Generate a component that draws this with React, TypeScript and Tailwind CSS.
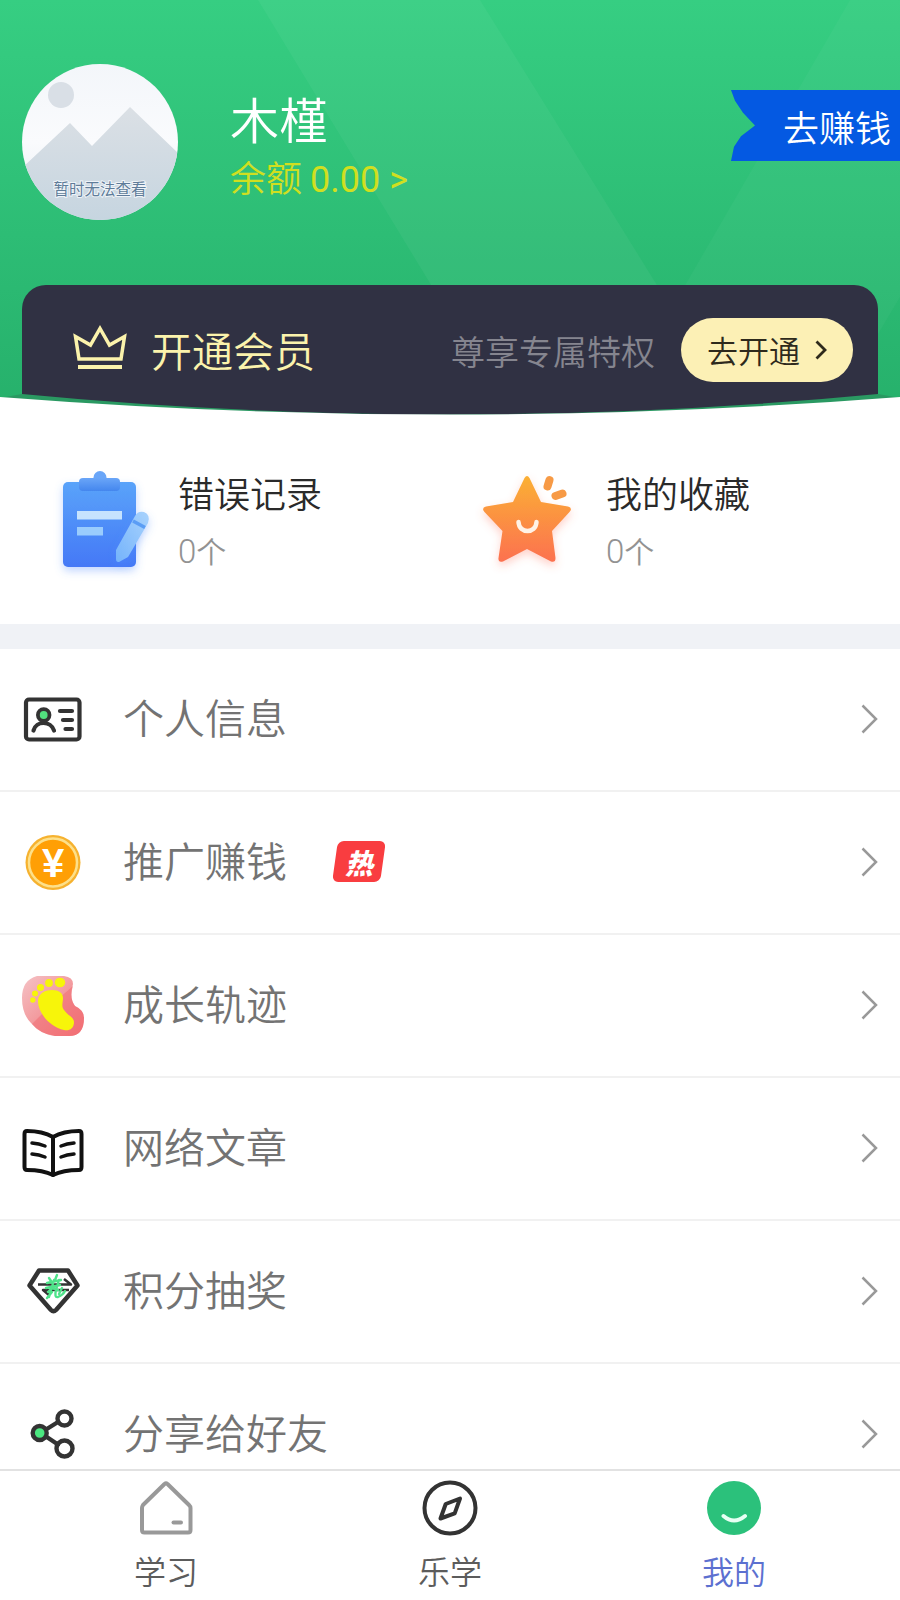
import type { ReactNode } from "react";

function Avatar() {
  return (
    <svg viewBox="0 0 156 156" className="size-39 shrink-0" role="img" aria-label="暂时无法查看">
      <defs>
        <linearGradient id="sky" x1="0" y1="0" x2="0" y2="1">
          <stop offset="0" stopColor="#f3f6fa" />
          <stop offset="0.5" stopColor="#fafbfd" />
          <stop offset="1" stopColor="#e6ecf2" />
        </linearGradient>
        <linearGradient id="hills" x1="0" y1="0" x2="0" y2="1">
          <stop offset="0" stopColor="#dbe0e5" />
          <stop offset="1" stopColor="#c6d5e0" />
        </linearGradient>
        <clipPath id="disc">
          <circle cx="78" cy="78" r="78" />
        </clipPath>
      </defs>
      <g clipPath="url(#disc)">
        <rect width="156" height="156" fill="url(#sky)" />
        <circle cx="39" cy="31" r="13" fill="#d9dfe6" />
        <path d="M0 104 L48 59 L70 82 L108 43 L156 89 V156 H0 Z" fill="url(#hills)" />
      </g>
      <text
        x="78"
        y="131"
        textAnchor="middle"
        fontSize="15.5"
        fontWeight="400"
        fill="#5f7c99"
        stroke="#eef3f8"
        strokeWidth="2"
        paintOrder="stroke"
      >
        暂时无法查看
      </text>
    </svg>
  );
}

function HeaderBackdrop() {
  return (
    <svg
      viewBox="0 0 900 415"
      preserveAspectRatio="none"
      aria-hidden="true"
      className="absolute inset-0 size-full"
    >
      <path d="M258 0 H480 L665 298 L740 415 H510 Z" fill="#fff" opacity="0.045" />
      <path d="M850 0 H900 V297 L830 415 H600 L665 320 Z" fill="#fff" opacity="0.03" />
    </svg>
  );
}

function HeaderCurve() {
  return (
    <svg
      viewBox="0 0 900 24"
      preserveAspectRatio="none"
      aria-hidden="true"
      className="absolute inset-x-0 bottom-0 h-6 w-full"
    >
      <path d="M22 3 Q450 44 878 3 L900 7 Q450 41 0 7 Z" fill="#2a9962" />
      <path d="M0 6 Q450 41 900 6 V24 H0 Z" fill="#fff" />
    </svg>
  );
}

function CrownIcon() {
  return (
    <svg viewBox="0 0 54 46" className="mb-1.5 h-[46px] w-[54px] shrink-0" fill="none" stroke="#fbf3ac" strokeWidth="3.5" aria-hidden="true">
      <path d="M2.5 12.5 L6 35 H48 L51.5 12.5 L36.5 21 L27 4.5 L17.5 21 Z" />
      <path d="M5 43 H49" strokeWidth="4" />
    </svg>
  );
}

function ClipboardIcon() {
  return (
    <svg viewBox="0 0 112 112" className="size-28 shrink-0 overflow-visible" aria-hidden="true">
      <defs>
        <linearGradient id="board" x1="0" y1="0" x2="0" y2="1">
          <stop offset="0" stopColor="#5aa3fa" />
          <stop offset="1" stopColor="#4478f6" />
        </linearGradient>
        <linearGradient id="clip" x1="0" y1="0" x2="0" y2="1">
          <stop offset="0" stopColor="#6aa6f8" />
          <stop offset="1" stopColor="#4486ee" />
        </linearGradient>
        <linearGradient id="pen" x1="1" y1="0" x2="0" y2="1">
          <stop offset="0" stopColor="#a9d3fd" />
          <stop offset="1" stopColor="#74b3fb" />
        </linearGradient>
        <filter id="blueGlow" x="-30%" y="-30%" width="160%" height="160%">
          <feDropShadow dx="0" dy="4" stdDeviation="4" floodColor="#4e8bff" floodOpacity="0.35" />
        </filter>
      </defs>
      <g filter="url(#blueGlow)">
        <rect x="20" y="20" width="73" height="85" rx="5" fill="url(#board)" />
      </g>
      <circle cx="57" cy="15.5" r="6.5" fill="#6aa6f8" />
      <rect x="36" y="16" width="41" height="13" rx="4" fill="url(#clip)" />
      <rect x="34" y="49" width="45" height="8.5" fill="#c6e3fe" />
      <rect x="34" y="65" width="26" height="8.5" fill="#9accfd" />
      <g filter="url(#blueGlow)">
        <path d="M73 88 L92 54 Q95 48.5 101 50 Q108 53 105 61 L85 95 L76 100 Q73 100.5 73 97 Z" fill="url(#pen)" />
      </g>
      <path d="M90 59 L102 65.5" stroke="#5b9df5" strokeWidth="3.5" />
    </svg>
  );
}

function StarIcon() {
  return (
    <svg viewBox="0 0 112 112" className="size-28 shrink-0 overflow-visible" aria-hidden="true">
      <defs>
        <linearGradient id="star" x1="0" y1="0" x2="0" y2="1">
          <stop offset="0" stopColor="#fbb034" />
          <stop offset="1" stopColor="#fc7150" />
        </linearGradient>
        <filter id="redGlow" x="-30%" y="-30%" width="160%" height="160%">
          <feDropShadow dx="0" dy="4" stdDeviation="4" floodColor="#ff6a50" floodOpacity="0.3" />
        </filter>
      </defs>
      <path
        filter="url(#redGlow)"
        d="M53.5 16 Q56 12 58.5 16 L70 40 L97 44.5 Q102 46 98.5 50 L81 69 L84.5 96 Q84.5 101 80 99.5 L56 87 L32 99.5 Q27 101 27.5 96 L31.5 69 L13.5 50 Q10 46 15 44.5 L42 40 Z"
        fill="url(#star)"
      />
      <path d="M78.5 18 L76.5 24.5 M84.5 34 L91.5 31.5" stroke="#f79a45" strokeWidth="8" strokeLinecap="round" />
      <path d="M47.5 60 C48 72 65 72 65.5 60" fill="none" stroke="#fff2e6" strokeWidth="4.5" strokeLinecap="round" />
    </svg>
  );
}

function IconFrame({ children }: { children: ReactNode }) {
  return (
    <svg viewBox="0 0 62 62" className="size-[62px] shrink-0" fill="none" strokeLinecap="round" strokeLinejoin="round" aria-hidden="true">
      {children}
    </svg>
  );
}

const idCard = (
  <IconFrame>
    <g stroke="#333" strokeWidth="4.2">
      <rect x="4" y="11.5" width="53.5" height="40" rx="3" />
      <path d="M11.5 42.5 C14 32.5 29 32.5 32 42.5" />
      <circle cx="21.7" cy="27" r="5.8" fill="#52e07f" strokeWidth="3.8" />
      <path d="M38 23 H50 M41 32 H50 M43.5 41 H50" />
    </g>
  </IconFrame>
);

const coin = (
  <IconFrame>
    <circle cx="31" cy="31.5" r="27.5" fill="#f6b22f" />
    <circle cx="31" cy="31.5" r="24" stroke="#fde08a" strokeWidth="2.5" fill="#ff9f05" />
    <text
      x="31"
      y="46"
      textAnchor="middle"
      fontSize="40"
      fontWeight="700"
      fill="#fff"
      className="font-['Liberation_Sans',sans-serif]"
    >
      ¥
    </text>
  </IconFrame>
);

const footprint = (
  <IconFrame>
    <defs>
      <linearGradient id="foot" x1="0" y1="0" x2="1" y2="1">
        <stop offset="0" stopColor="#f5c3c6" />
        <stop offset="0.5" stopColor="#f3989c" />
        <stop offset="1" stopColor="#f47176" />
      </linearGradient>
    </defs>
    <path
      d="M15 2 H42 Q51 3 51 10 Q47 24 53 32 Q62 36 62 44 Q62 62 47 62 H33 Q18 60 9 49 Q0 40 0 24 Q0 6 15 2 Z"
      fill="url(#foot)"
    />
    <path d="M10 50 L28 32 L51 12 Q47 24 53 32 Q62 36 62 44 Q62 62 47 62 H33 Q18 60 10 50 Z" fill="#ef6a70" opacity="0.5" />
    <g fill="#f7f50a">
      <path d="M16 27 C16 19 24 16 30 16 C37 16 41 19 41 24 C41 29 39 32 42 36 C46 42 52 43 52 48 C52 55 47 57 42 56 C32 54 23 46 19 38 C17 34 16 31 16 27 Z" />
      <ellipse cx="38" cy="8.5" rx="5.2" ry="4.8" />
      <circle cx="27" cy="9" r="3.9" />
      <circle cx="18.5" cy="13.5" r="3.5" />
      <circle cx="13" cy="19.5" r="3" />
      <circle cx="10.8" cy="26" r="2.7" />
    </g>
  </IconFrame>
);

const book = (
  <IconFrame>
    <g stroke="#111" strokeWidth="4">
      <path d="M31 20 C24 16 14 14 5 14 Q2.5 14 2.5 17 V50 Q2.5 53 5 53 C14 53 23 54 31 58 C39 54 48 53 57 53 Q59.500 53 59.5 50 V17 Q59.5 14 57 14 C48 14 38 16 31 20 Z" />
      <path d="M31 20 V58" />
      <path d="M10 26 Q17 26.5 23 29 M10 37 Q17 37.5 23 40 M39 29 Q45 26.5 52 26 M39 40 Q45 37.5 52 37" strokeWidth="3.5" />
    </g>
  </IconFrame>
);

const diamond = (
  <IconFrame>
    <path d="M17 10.5 H46 L55.5 25.5 L34 50 Q31.5 52.5 29 50 L7.5 25.5 Z" stroke="#333" strokeWidth="4.5" />
    <path d="M16 24.5 H49 L42 19 M47 30 H21 L27 35" stroke="#333" strokeWidth="2.5" strokeLinecap="butt" />
    <path
      d="M27 18 L29 21 M35 15 L33 20 M25 23 L39 20 M32 20 L27 37 M24 28 L38 25 M37 20 L34 30 M26 32 L30 28 L36 30 M25 38 L30 32 M34 30 Q32 38 36 37 Q41 35 43 31 M40 28 L37 34"
      stroke="#4fe38a"
      strokeWidth="2.4"
    />
  </IconFrame>
);

const share = (
  <IconFrame>
    <g stroke="#333" strokeWidth="4.4">
      <path d="M24 26.5 L36 19 M24 33.5 L36 41.5" />
      <circle cx="17.7" cy="30" r="7" fill="#4be880" />
      <circle cx="42.5" cy="15.5" r="7" />
      <circle cx="42.5" cy="45.5" r="8" />
    </g>
  </IconFrame>
);

type MenuItem = { label: string; icon: ReactNode; hot?: boolean };

const menu: MenuItem[] = [
  { label: "个人信息", icon: idCard },
  { label: "推广赚钱", icon: coin, hot: true },
  { label: "成长轨迹", icon: footprint },
  { label: "网络文章", icon: book },
  { label: "积分抽奖", icon: diamond },
  { label: "分享给好友", icon: share },
];

function HotBadge() {
  return (
    <span className="relative ml-12 flex h-[41px] w-12 items-center justify-center">
      <span className="absolute inset-0 -skew-x-8 rounded-md bg-[#f93d40]" />
      <span className="relative text-[28px] leading-[32px] font-black text-white italic">热</span>
    </span>
  );
}

function MenuRow({ label, icon, hot }: MenuItem) {
  return (
    <li className="border-b-2 border-[#f1f1f1]">
      <a href="#" className="flex h-[141px] items-center px-[22px] pb-0.5">
        {icon}
        <span className="ml-[39px] pb-1 text-[41px] text-[#737373]">{label}</span>
        {hot && <HotBadge />}
        <svg viewBox="0 0 17 30" className="ml-auto h-[30px] w-[17px]" fill="none" stroke="#999" strokeWidth="2.5" aria-hidden="true">
          <path d="M1.5 1.5 L15 15 L1.5 28.5" />
        </svg>
      </a>
    </li>
  );
}

function StatCard({ icon, title, count }: { icon: ReactNode; title: string; count: number }) {
  return (
    <a href="#" className="flex items-center pl-[21px]">
      {icon}
      <span className="ml-[23px] flex flex-col gap-2 pt-2">
        <span className="text-[36px] leading-[50px] text-[#2a2a2a]">{title}</span>
        <span className="text-[30px] leading-[50px] text-[#929292]">
          <span className="font-['Roboto',sans-serif] text-[33px]">{count}</span>个
        </span>
      </span>
    </a>
  );
}

const homeIcon = (
  <g stroke="#999" strokeWidth="4">
    <path d="M26.5 4 Q28 2.8 29.5 4 L51 25 Q52.5 26.5 52.5 28 V50 Q52.5 52.5 50 52.5 H6.5 Q4 52.5 4 50 V28 Q4 26.5 5 25 Z" />
    <path d="M35.5 42.5 H43" />
  </g>
);

const compassIcon = (
  <g stroke="#333" strokeWidth="4">
    <circle cx="28" cy="28" r="25.5" />
    <path d="M38 18.5 L32.7 33.3 L18.5 38.5 L23.7 24 Z" />
  </g>
);

const smileIcon = (
  <g>
    <circle cx="28" cy="28" r="27" fill="#2bc17b" />
    <path d="M17.5 36 Q28 45 39 36" stroke="#e8fff4" strokeWidth="4" />
  </g>
);

const tabs = [
  { label: "学习", icon: homeIcon, active: false },
  { label: "乐学", icon: compassIcon, active: false },
  { label: "我的", icon: smileIcon, active: true },
];

export default function App() {
  return (
    <div className="flex h-screen flex-col bg-white font-['Noto_Sans_CJK_SC',sans-serif] font-[350]">
      <main className="min-h-0 flex-1 overflow-y-auto [scrollbar-width:none]">
        <header className="relative bg-linear-to-b from-[#36ce82] to-[#26b06b] pt-16">
          <HeaderBackdrop />
          <div className="relative flex h-39 items-start pl-[22px]">
            <Avatar />
            <div className="mt-6 ml-[52px]">
              <h1 className="text-[49px] leading-[60px] text-white">木槿</h1>
              <a href="#" className="block text-[36px] leading-[56px] text-[#d0df20]">
                余额 <span className="font-['Roboto',sans-serif] font-normal">0.00 &gt;</span>
              </a>
            </div>
            <a
              href="#"
              className="mt-[26px] ml-auto flex h-[71px] items-center bg-[#0459e2] pr-[9px] pl-[52px] text-[36px] text-white [clip-path:polygon(0_0,100%_0,100%_100%,0_100%,3px_80%,10px_65%,24px_50%,12px_32%,4px_15%)]"
            >
              去赚钱
            </a>
          </div>
          <section className="relative mx-[22px] mt-[65px] flex h-[130px] items-center rounded-t-3xl bg-[#303143] pr-[25px] pl-[51px]">
            <CrownIcon />
            <h2 className="ml-6 text-[41px] text-[#fbf3ac]">开通会员</h2>
            <p className="mr-[26px] ml-auto text-[34px] text-[#85858f]">尊享专属特权</p>
            <button type="button" className="flex h-16 items-center gap-[15px] rounded-full bg-[#fcf0b5] px-[26px] text-[31px] text-[#2e2a1c]">
              去开通
              <svg viewBox="0 0 12 20" className="h-5 w-3" fill="none" stroke="currentColor" strokeWidth="2.8" aria-hidden="true">
                <path d="M1.5 1.5 L10 10 L1.5 18.5" />
              </svg>
            </button>
          </section>
          <HeaderCurve />
        </header>

        <section className="grid h-[209px] grid-cols-2 items-center px-[22px] pb-1">
          <StatCard icon={<ClipboardIcon />} title="错误记录" count={0} />
          <StatCard icon={<StarIcon />} title="我的收藏" count={0} />
        </section>

        <div className="h-[25px] bg-[#f0f2f6]" />

        <ul>
          {menu.map((item) => (
            <MenuRow key={item.label} {...item} />
          ))}
        </ul>
      </main>

      <nav className="h-[131px] shrink-0 border-t-2 border-[#e2e2e2] bg-white px-6">
        <ul className="grid grid-cols-3">
          {tabs.map((tab) => (
            <li key={tab.label}>
              <a href="#" className="flex flex-col items-center pt-[9px]">
                <svg viewBox="0 0 56 56" className="size-14" fill="none" strokeLinecap="round" strokeLinejoin="round" aria-hidden="true">
                  {tab.icon}
                </svg>
                <span
                  className={
                    tab.active
                      ? "mt-[11px] text-[32px] leading-[46px] text-[#5c70d0]"
                      : "mt-[11px] text-[32px] leading-[46px] text-[#5c5c5c]"
                  }
                >
                  {tab.label}
                </span>
              </a>
            </li>
          ))}
        </ul>
      </nav>
    </div>
  );
}
